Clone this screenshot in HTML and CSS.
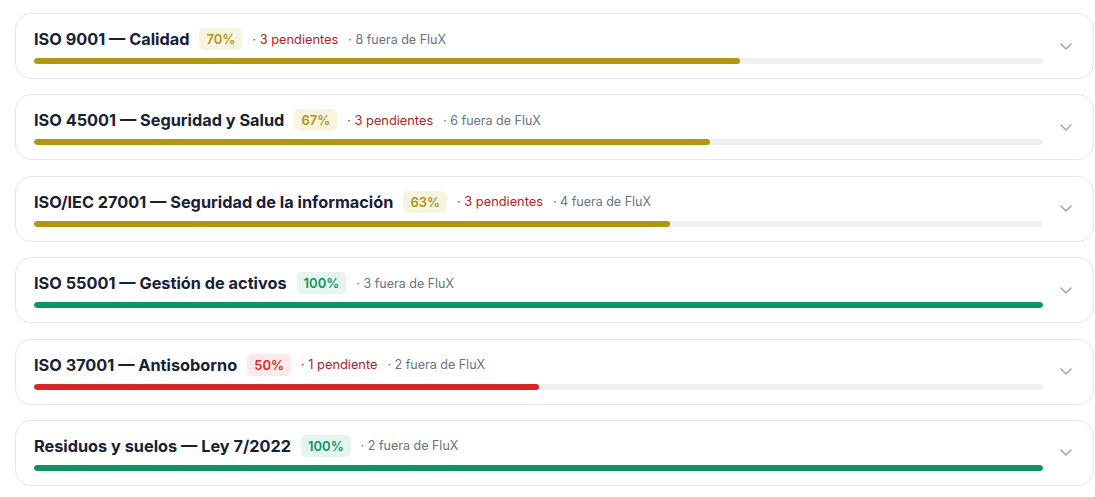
FILE: index.html
```html
<!DOCTYPE html>
<html lang="es">
<head>
<meta charset="utf-8">
<link rel="stylesheet" href="styles.css">
</head>
<body>
<div class="list">
  <div class="card">
    <div class="main">
      <div class="head">
        <span class="title">ISO 9001 — Calidad</span>
        <span class="badge warn">70%</span>
        <span class="pend">· 3 pendientes</span>
        <span class="out">· 8 fuera de FluX</span>
      </div>
      <div class="track"><div class="fill warn" style="width:70%"></div></div>
    </div>
    <div class="chev"><svg width="12" height="7" viewBox="0 0 12 7"><path d="M1 1l5 5 5-5" fill="none" stroke="currentColor" stroke-width="1.5" stroke-linecap="round" stroke-linejoin="round"/></svg></div>
  </div>
  <div class="card">
    <div class="main">
      <div class="head">
        <span class="title">ISO 45001 — Seguridad y Salud</span>
        <span class="badge warn">67%</span>
        <span class="pend">· 3 pendientes</span>
        <span class="out">· 6 fuera de FluX</span>
      </div>
      <div class="track"><div class="fill warn" style="width:67%"></div></div>
    </div>
    <div class="chev"><svg width="12" height="7" viewBox="0 0 12 7"><path d="M1 1l5 5 5-5" fill="none" stroke="currentColor" stroke-width="1.5" stroke-linecap="round" stroke-linejoin="round"/></svg></div>
  </div>
  <div class="card">
    <div class="main">
      <div class="head">
        <span class="title">ISO/IEC 27001 — Seguridad de la información</span>
        <span class="badge warn">63%</span>
        <span class="pend">· 3 pendientes</span>
        <span class="out">· 4 fuera de FluX</span>
      </div>
      <div class="track"><div class="fill warn" style="width:63%"></div></div>
    </div>
    <div class="chev"><svg width="12" height="7" viewBox="0 0 12 7"><path d="M1 1l5 5 5-5" fill="none" stroke="currentColor" stroke-width="1.5" stroke-linecap="round" stroke-linejoin="round"/></svg></div>
  </div>
  <div class="card">
    <div class="main">
      <div class="head">
        <span class="title">ISO 55001 — Gestión de activos</span>
        <span class="badge ok">100%</span>
        <span class="out">· 3 fuera de FluX</span>
      </div>
      <div class="track"><div class="fill ok" style="width:100%"></div></div>
    </div>
    <div class="chev"><svg width="12" height="7" viewBox="0 0 12 7"><path d="M1 1l5 5 5-5" fill="none" stroke="currentColor" stroke-width="1.5" stroke-linecap="round" stroke-linejoin="round"/></svg></div>
  </div>
  <div class="card">
    <div class="main">
      <div class="head">
        <span class="title">ISO 37001 — Antisoborno</span>
        <span class="badge bad">50%</span>
        <span class="pend">· 1 pendiente</span>
        <span class="out">· 2 fuera de FluX</span>
      </div>
      <div class="track"><div class="fill bad" style="width:50%"></div></div>
    </div>
    <div class="chev"><svg width="12" height="7" viewBox="0 0 12 7"><path d="M1 1l5 5 5-5" fill="none" stroke="currentColor" stroke-width="1.5" stroke-linecap="round" stroke-linejoin="round"/></svg></div>
  </div>
  <div class="card">
    <div class="main">
      <div class="head">
        <span class="title">Residuos y suelos — Ley 7/2022</span>
        <span class="badge ok">100%</span>
        <span class="out">· 2 fuera de FluX</span>
      </div>
      <div class="track"><div class="fill ok" style="width:100%"></div></div>
    </div>
    <div class="chev"><svg width="12" height="7" viewBox="0 0 12 7"><path d="M1 1l5 5 5-5" fill="none" stroke="currentColor" stroke-width="1.5" stroke-linecap="round" stroke-linejoin="round"/></svg></div>
  </div>
</div>
</body>
</html>
```
FILE: styles.css
```css
* { box-sizing: border-box; }
html, body { margin: 0; padding: 0; background: #fff; }
body {
  font-family: Inter, "Noto Sans", sans-serif;
  color: #172036;
}
.list {
  display: flex;
  flex-direction: column;
  gap: 15.4px;
  padding: 13px 0 0 15px;
  width: 1094px;
}
.card {
  display: flex;
  align-items: center;
  gap: 14px;
  border: 1px solid #e6e7ea;
  border-radius: 16px;
  padding: 14px 18px;
  background: #fff;
}
.main {
  flex: 1;
  display: flex;
  flex-direction: column;
  gap: 8px;
}
.head {
  display: flex;
  align-items: center;
  gap: 10px;
  height: 22px;
}
.title {
  font-size: 16.3px;
  font-weight: 700;
  color: #172036;
}
.badge {
  font-size: 13px;
  font-weight: 600;
  height: 22px;
  line-height: 22px;
  padding: 0 7px;
  border-radius: 5px;
}
.badge.warn { background: #f8f4e2; color: #b3940f; }
.badge.ok { background: #e5f5ee; color: #0c9468; }
.badge.bad { background: #fde9e9; color: #d82c2c; }
.pend {
  font-size: 12.8px;
  color: #b42323;
}
.out {
  font-size: 12.5px;
  color: #6b7280;
}
.track {
  height: 6px;
  border-radius: 3px;
  background: #efefef;
  overflow: hidden;
}
.fill { height: 100%; border-radius: 3px; }
.fill.warn { background: #b3960f; }
.fill.ok { background: #0a9467; }
.fill.bad { background: #d82626; }
.chev {
  width: 18px;
  display: flex;
  justify-content: center;
  color: #a2a6ad;
}
```
